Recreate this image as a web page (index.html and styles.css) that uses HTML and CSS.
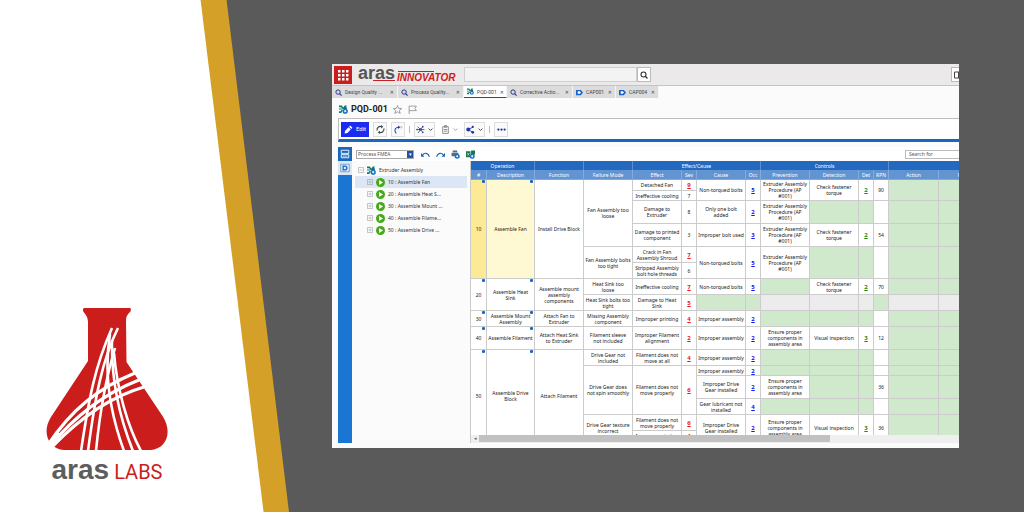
FILE: index.html
```html
<!DOCTYPE html>
<html lang="en">
<head>
<meta charset="utf-8">
<title>Aras Labs – PQD-001</title>
<link rel="stylesheet" href="styles.css">
</head>
<body>
<svg class="defs" aria-hidden="true">
  <symbol id="i-search" viewBox="0 0 16 16"><circle cx="7" cy="7" r="5" fill="none" stroke="currentColor" stroke-width="2.2"/><path d="M10.5 10.5 15 15" stroke="currentColor" stroke-width="2.6"/></symbol>
  <symbol id="i-pqd" viewBox="0 0 16 16"><path d="M0 1h5l3 4 2-4h4L11 6 6 7 4 4H0zM0 6h5v2H0zM0 14h4l3-5-2-1-2 3H0z" fill="#0b7a75"/><path d="M8 4h6v3H8z" fill="#146b5c"/><circle cx="11" cy="11" r="4.6" fill="#1b73c9"/><circle cx="11" cy="11" r="1.9" fill="#e7f3fb"/></symbol>
  <symbol id="i-cap" viewBox="0 0 16 16"><path d="M0 2h11l5 6-5 6H0z" fill="#1565c8"/><path d="M4 5h4.500l3 3-3 3H4z" fill="#fff"/></symbol>
  <symbol id="i-down" viewBox="0 0 8 8"><path d="m1 2.500 3 3 3-3" fill="none" stroke="currentColor" stroke-width="1.400"/></symbol>
  <symbol id="i-play" viewBox="0 0 16 16"><circle cx="8" cy="8" r="8" fill="#46a81c"/><path d="M5.500 3.500 12.500 8l-7 4.500z" fill="#fff"/></symbol>
  <symbol id="i-plus" viewBox="0 0 12 12"><path d="M1 1h10v10H1zM3 6h6M6 3v6" fill="none" stroke="#8b9096"/></symbol>
</svg>
<div class="slide">
  <aside class="brand">
    <div class="brand-panel">
      <div class="brand-mark">
        <svg class="flask" viewBox="0 0 122 142" role="img" aria-label="Aras Labs flask">
          <path d="M37 1 38 0h46l1 1-.5 2.500C82 6 80 8 80 12l.5 42 36 54c11 17 3 33-12 34H18C3 141-5 125 5 109l37-56V14c0-5-3-8-5-11z" fill="#cb1d1c"/>
          <g fill="none" stroke="#fff" stroke-width="2.600">
            <path d="M66 20C49 58 43 90 35 143"/>
            <path d="M72 20C56 52 49 90 42 143"/>
            <path d="M69 40C60 70 54 102 50 143"/>
            <path d="M64 26C57 68 66 110 78 143"/>
            <path d="M66 32C65 76 75 113 87 143"/>
            <path d="M68 45C71 82 82 119 95 143"/>
            <path d="M2 137C25 102 52 80 89 65" stroke-width="3.200"/>
            <path d="M4 138C29 108 57 86 93 72" stroke-width="3.200"/>
            <path d="M6 139C30 114 60 90 98 79" stroke-width="3.200"/>
            <path d="M2 140 13 125" stroke-width="6"/>
          </g>
        </svg>
        <p class="brand-name"><b>aras</b> <span>LABS</span></p>
      </div>
    </div>
  </aside>
  <main class="stage">
    <div class="app">
      <header class="top">
        <button class="waffle" aria-label="Applications"><svg viewBox="0 0 18 18"><path d="M4 4h2.500v2.500H4zM8 4h2.500v2.500H8zM12 4h2.500v2.500H12zM4 8h2.500v2.500H4zM8 8h2.500v2.500H8zM12 8h2.500v2.500H12zM4 12h2.500v2.500H4zM8 12h2.500v2.500H8zM12 12h2.500v2.500H12z" fill="#fff"/></svg></button>
        <p class="wordmark"><b>aras</b><i>INNOVATOR</i></p>
        <form class="search">
          <input type="text" aria-label="Search">
          <button type="button" aria-label="Run search"><svg><use href="#i-search"/></svg></button>
        </form>
        <button class="panes" aria-label="Layout"><svg viewBox="0 0 9 8"><path d="M.5 1h8v6h-8zM4.500 1v6" fill="none" stroke="#444"/></svg></button>
      </header>
      <nav class="tabs">
        <a href="#" class="tab w66"><svg><use href="#i-search"/></svg><span>Design Quality ...</span><b>✕</b></a>
        <a href="#" class="tab w66"><svg><use href="#i-search"/></svg><span>Process Quality...</span><b>✕</b></a>
        <a href="#" class="tab w43 active"><svg><use href="#i-pqd"/></svg><span>PQD-001</span><b>✕</b></a>
        <a href="#" class="tab w66"><svg><use href="#i-search"/></svg><span>Corrective Actio...</span><b>✕</b></a>
        <a href="#" class="tab w43"><svg><use href="#i-cap"/></svg><span>CAP001</span><b>✕</b></a>
        <a href="#" class="tab w43"><svg><use href="#i-cap"/></svg><span>CAP004</span><b>✕</b></a>
      </nav>
      <div class="title">
        <svg><use href="#i-pqd"/></svg>
        <h1>PQD-001</h1>
        <svg viewBox="0 0 16 16"><path d="m8 1 2 5 5.500.3-4.300 3.500L12.800 15 8 12l-4.800 3 1.600-5.200L.5 6.300 6 6z" fill="none" stroke="#777" stroke-width="1.200"/></svg>
        <svg class="flag" viewBox="0 0 16 16"><path d="M2 16V2h13l-3 4 3 4H2" fill="none" stroke="#888" stroke-width="1.400"/></svg>
      </div>
      <div class="toolbar">
        <button class="tool edit"><svg viewBox="0 0 16 16"><path d="m1 15 1-5 6-6 4 4-6 6zM9 3l2-2 4 4-2 2z" fill="#fff"/></svg>Edit</button>
        <button class="tool" aria-label="Refresh"><svg viewBox="0 0 16 16"><path d="M2 10a6 6 0 0 1 8-7M14 6a6 6 0 0 1-8 7" fill="none" stroke="#3c4a50" stroke-width="2"/><path d="M9 0l4 3-4 3zM7 10l-4 3 4 3z" fill="#3c4a50"/></svg></button>
        <button class="tool" aria-label="Redo"><svg viewBox="0 0 16 16"><path d="M4 15C-1 9 3 3 10 4" fill="none" stroke="#2c3e9e" stroke-width="1.800"/><path d="M7 1l4 3-4 3z" fill="#2c3e9e"/><circle cx="13" cy="4" r="1.500" fill="none" stroke="#8aa0cf"/></svg></button>
        <span class="rule"></span>
        <button class="tool wide" aria-label="Structure"><svg viewBox="0 0 16 16"><path d="M8 8 3 3M8 8l4-5M8 8H1M8 8h7M8 8l-4 6M8 8l4 5" stroke="#37474f" stroke-width="1.400"/><g fill="#2c3e9e"><circle cx="8" cy="8" r="2.200"/><circle cx="12" cy="3" r="1.500"/><circle cx="2" cy="8" r="1.500"/><circle cx="12" cy="13" r="1.500"/></g></svg><svg class="caret"><use href="#i-down"/></svg></button>
        <button class="tool wide plain" aria-label="Paste"><svg viewBox="0 0 16 16"><path d="M3 3h10v12H3zM6 1h4v3H6zM5 8h6M5 11h6" fill="none" stroke="#8a8a8a" stroke-width="1.700"/></svg><svg class="caret"><use href="#i-down"/></svg></button>
        <button class="tool wide" aria-label="Share"><svg viewBox="0 0 16 16"><path d="M4 8l8-4M4 8l8 5" stroke="#2434ae" stroke-width="1.500"/><g fill="#2434ae"><circle cx="4" cy="8" r="3.500"/><circle cx="12" cy="3.500" r="2"/><circle cx="12" cy="13" r="2.500"/></g></svg><svg class="caret"><use href="#i-down"/></svg></button>
        <span class="rule"></span>
        <button class="tool" aria-label="More"><svg viewBox="0 0 16 16"><g fill="#26308c"><circle cx="2.500" cy="8" r="2"/><circle cx="8" cy="8" r="2"/><circle cx="13.500" cy="8" r="2"/></g></svg></button>
      </div>
      <section class="work">
        <div class="rail">
          <button aria-label="Form view"><svg viewBox="0 0 16 16"><path d="M2 2h12v5H2zM2 9h12v5H2z" fill="none" stroke="#fff" stroke-width="1.400"/><path d="M4 11.500h8" stroke="#fff"/></svg></button>
          <button class="on" aria-label="FMEA view"><svg viewBox="0 0 16 16"><path d="M1 2h14v12H1z" fill="none" stroke="#567fa9"/><path d="M5 5h3a3 3 0 0 1 0 6H5z" fill="none" stroke="#1565c0" stroke-width="2"/></svg></button>
        </div>
        <div class="editor">
          <div class="bar">
            <div class="picker"><select aria-label="Process view"><option>Process FMEA</option></select><span>▾</span></div>
            <svg viewBox="0 0 16 16"><path d="M3 9c3-5 10-4 12 3" fill="none" stroke="#1767b8" stroke-width="2"/><path d="M0 5v7h6z" fill="#1767b8"/></svg>
            <svg class="redo" viewBox="0 0 16 16"><path d="M13 9C10 4 3 5 1 12" fill="none" stroke="#1767b8" stroke-width="2"/><path d="M16 5v7h-6z" fill="#1767b8"/></svg>
            <svg viewBox="0 0 16 16"><path d="M1 5h12v6H1zM3 1h8v3H3z" fill="#5d6b75"/><circle cx="11" cy="11" r="4.500" fill="#1b73c9"/><circle cx="11" cy="11" r="1.800" fill="#fff"/></svg>
            <svg viewBox="0 0 16 16"><path d="M0 2h8v11H0zM9 1h7v7H9z" fill="#1b7444"/><path d="m2 5 4 5M6 5l-4 5" stroke="#fff"/><circle cx="11" cy="11" r="4.500" fill="#1b73c9"/><circle cx="11" cy="11" r="1.800" fill="#fff"/></svg>
            <input class="find" type="text" placeholder="Search for" aria-label="Search for">
          </div>
          <div class="split">
            <ul class="tree">
              <li class="root"><svg viewBox="0 0 12 12"><path d="M1 1h10v10H1zM3 6h6" fill="none" stroke="#8b9096"/></svg><svg class="kind"><use href="#i-pqd"/></svg>Extruder Assembly</li>
              <li class="picked"><svg><use href="#i-plus"/></svg><svg class="kind"><use href="#i-play"/></svg>10 : Assemble Fan</li>
              <li><svg><use href="#i-plus"/></svg><svg class="kind"><use href="#i-play"/></svg>20 : Assemble Heat S...</li>
              <li><svg><use href="#i-plus"/></svg><svg class="kind"><use href="#i-play"/></svg>30 : Assemble Mount ...</li>
              <li><svg><use href="#i-plus"/></svg><svg class="kind"><use href="#i-play"/></svg>40 : Assemble Filame...</li>
              <li><svg><use href="#i-plus"/></svg><svg class="kind"><use href="#i-play"/></svg>50 : Assemble Drive ...</li>
            </ul>
            <div class="grid">
              <div class="view">
                <table>
                  <colgroup><col class="c-no"><col class="c-desc"><col class="c-text"><col class="c-text"><col class="c-text"><col class="c-num"><col class="c-text"><col class="c-num"><col class="c-text"><col class="c-text"><col class="c-num"><col class="c-num"><col class="c-last"><col class="c-last"></colgroup>
                  <thead>
                    <tr class="groups"><th colspan="2">Operation</th><th></th><th></th><th colspan="4">Effect/Cause</th><th colspan="4">Controls</th><th colspan="2"></th></tr>
                    <tr><th>#</th><th>Description</th><th>Function</th><th>Failure Mode</th><th>Effect</th><th>Sev</th><th>Cause</th><th>Occ</th><th>Prevention</th><th>Detection</th><th>Det</th><th>RPN</th><th>Action</th><th>Resp</th></tr>
                  </thead>
                  <tbody>
                    <tr class="r1"><td rowspan="6" class="dot gold">10</td><td rowspan="6" class="dot cream">Assemble Fan</td><td rowspan="6">Install Drive Block</td><td rowspan="4">Fan Assembly too loose</td><td>Detached Fan</td><td><a class="sev" href="#">9</a></td><td rowspan="2">Non-torqued bolts</td><td rowspan="2"><a class="occ" href="#">5</a></td><td rowspan="2">Extruder Assembly Procedure (AP<br>#001)</td><td rowspan="2">Check fastener torque</td><td rowspan="2"><a class="det" href="#">2</a></td><td rowspan="2">90</td><td rowspan="2" class="na"></td><td rowspan="2" class="na"></td></tr>
                    <tr class="r0"><td>Ineffective cooling</td><td>7</td></tr>
                    <tr class="r3"><td>Damage to<br>Extruder</td><td>8</td><td>Only one bolt<br>added</td><td><a class="occ" href="#">2</a></td><td>Extruder Assembly Procedure (AP<br>#001)</td><td class="na"></td><td class="na"></td><td></td><td class="na"></td><td class="na"></td></tr>
                    <tr class="r3"><td>Damage to printed component</td><td>3</td><td>Improper bolt used</td><td><a class="occ" href="#">3</a></td><td>Extruder Assembly Procedure (AP<br>#001)</td><td>Check fastener torque</td><td><a class="det" href="#">2</a></td><td>54</td><td class="na"></td><td class="na"></td></tr>
                    <tr class="r2"><td rowspan="2">Fan Assembly bolts too tight</td><td>Crack in Fan Assembly Shroud</td><td><a class="sev" href="#">7</a></td><td rowspan="2">Non-torqued bolts</td><td rowspan="2"><a class="occ" href="#">5</a></td><td rowspan="2">Extruder Assembly Procedure (AP<br>#001)</td><td rowspan="2" class="na"></td><td rowspan="2" class="na"></td><td rowspan="2"></td><td rowspan="2" class="na"></td><td rowspan="2" class="na"></td></tr>
                    <tr class="r2"><td>Stripped Assembly bolt hole threads</td><td>6</td></tr>
                    <tr class="r2"><td rowspan="2" class="dot">20</td><td rowspan="2" class="dot">Assemble Heat<br>Sink</td><td rowspan="2">Assemble mount assembly components</td><td>Heat Sink too<br>loose</td><td>Ineffective cooling</td><td><a class="sev" href="#">7</a></td><td>Non-torqued bolts</td><td><a class="occ" href="#">5</a></td><td class="na"></td><td>Check fastener torque</td><td><a class="det" href="#">2</a></td><td>70</td><td class="na"></td><td class="na"></td></tr>
                    <tr class="r2"><td>Heat Sink bolts too tight</td><td>Damage to Heat<br>Sink</td><td><a class="sev" href="#">5</a></td><td class="na"></td><td class="na"></td><td class="off"></td><td class="off"></td><td class="off"></td><td class="na"></td><td class="off"></td><td class="off"></td></tr>
                    <tr class="r2"><td class="dot">30</td><td class="dot">Assemble Mount Assembly</td><td>Attach Fan to Extruder</td><td>Missing Assembly component</td><td>Improper printing</td><td><a class="sev" href="#">4</a></td><td>Improper assembly</td><td><a class="occ" href="#">2</a></td><td class="na"></td><td class="na"></td><td class="na"></td><td></td><td class="na"></td><td class="na"></td></tr>
                    <tr class="r3"><td class="dot">40</td><td class="dot">Assemble Filament</td><td>Attach Heat Sink<br>to Extruder</td><td>Filament sleeve<br>not included</td><td>Improper Filament alignment</td><td><a class="sev" href="#">2</a></td><td>Improper assembly</td><td><a class="occ" href="#">2</a></td><td>Ensure proper components in assembly area</td><td>Visual inspection</td><td><a class="det" href="#">3</a></td><td>12</td><td class="na"></td><td class="na"></td></tr>
                    <tr class="r2"><td rowspan="6" class="dot">50</td><td rowspan="6" class="dot">Assemble Drive Block</td><td rowspan="6">Attach Filament</td><td>Drive Gear not included</td><td>Filament does not move at all</td><td><a class="sev" href="#">4</a></td><td>Improper assembly</td><td><a class="occ" href="#">2</a></td><td class="na"></td><td class="na"></td><td class="na"></td><td></td><td class="na"></td><td class="na"></td></tr>
                    <tr class="r0"><td rowspan="3">Drive Gear does<br>not spin smoothly</td><td rowspan="3">Filament does not move properly</td><td rowspan="3"><a class="sev" href="#">6</a></td><td>Improper assembly</td><td><a class="occ" href="#">2</a></td><td class="na"></td><td class="na"></td><td class="na"></td><td></td><td class="na"></td><td class="na"></td></tr>
                    <tr class="r3"><td>Improper Drive<br>Gear installed</td><td><a class="occ" href="#">2</a></td><td>Ensure proper components in assembly area</td><td class="na"></td><td class="na"></td><td>36</td><td class="na"></td><td class="na"></td></tr>
                    <tr class="r2"><td>Gear lubricant not installed</td><td><a class="occ" href="#">4</a></td><td class="na"></td><td class="na"></td><td class="na"></td><td></td><td class="na"></td><td class="na"></td></tr>
                    <tr class="r2"><td rowspan="2">Drive Gear texture incorrect</td><td>Filament does not move properly</td><td><a class="sev" href="#">6</a></td><td rowspan="2">Improper Drive<br>Gear installed</td><td rowspan="2"><a class="occ" href="#">2</a></td><td rowspan="2">Ensure proper components in assembly area</td><td rowspan="2">Visual inspection</td><td rowspan="2"><a class="det" href="#">3</a></td><td rowspan="2">36</td><td rowspan="2" class="na"></td><td rowspan="2" class="na"></td></tr>
                    <tr class="r1"><td>Improper printing</td><td><a class="sev" href="#">4</a></td></tr>
                  </tbody>
                </table>
              </div>
              <div class="scroll"><span>◂</span><div class="thumb"></div></div>
            </div>
          </div>
        </div>
      </section>
    </div>
  </main>
</div>
</body>
</html>
```

FILE: styles.css
```css
* { box-sizing: border-box; }
body { margin: 0; background: #5a5a5a; font-family: "Noto Sans", "Open Sans", sans-serif; color: #333; }
h1, p, ul { margin: 0; padding: 0; }
button, input, select { font: inherit; color: inherit; margin: 0; padding: 0; border: 0; border-radius: 0; }
a { color: inherit; }
svg { display: block; flex: none; }
.defs { position: absolute; width: 0; height: 0; }

.slide { display: flex; height: 100vh; overflow: hidden; }
.brand { flex: none; width: 289px; background: #d4a027; clip-path: polygon(0 0, 78.400% 0, 100% 100%, 0 100%); }
.brand-panel { height: 100%; background: #fff; clip-path: polygon(0 0, 69.400% 0, 91.200% 100%, 0 100%); display: flex; flex-direction: column; justify-content: flex-end; }
.brand-mark { width: 214px; padding-bottom: 22px; display: flex; flex-direction: column; align-items: center; }
.flask { width: 122px; height: 142px; }
.brand-name { display: flex; align-items: baseline; gap: 5px; line-height: 40px; font-family: "Liberation Sans", Arial, sans-serif; }
.brand-name b { font-size: 28px; color: #5c5d5d; }
.brand-name span { font: 400 20px Roboto, sans-serif; color: #cb1d1c; }

.stage { flex: 1; min-width: 0; padding: 64px 65px 64px 43px; }
.app { height: 100%; background: #fbfbfb; display: flex; flex-direction: column; overflow: hidden; }

.top { flex: none; height: 22px; padding: 2px 0 2px 2px; background: #ebe9e9; border-bottom: 1px solid #c4c4c4; display: flex; align-items: center; }
.waffle { width: 18px; height: 18px; background: #cb1d1c; }
.waffle svg { width: 18px; height: 18px; }
.wordmark { display: flex; align-items: flex-start; gap: 2px; margin-left: 6px; width: 106px; height: 18px; }
.wordmark b { position: relative; font: bold 18px/14px "Liberation Sans", Arial, sans-serif; color: #555; }
.wordmark i { position: relative; margin-top: 4px; font: italic bold 10px/16px "Liberation Sans", Arial, sans-serif; color: #cb1d1c; }
.wordmark b::after { content: ""; position: absolute; left: 15px; right: 0; bottom: -1px; height: 1px; background: #cb1d1c; }
.wordmark i::before { content: ""; position: absolute; left: 1px; width: 36px; top: 1px; height: 1px; background: #cb1d1c; }
.search { display: flex; height: 15px; }
.search input { width: 173px; background: #f3f3f3; border: 1px solid #cfcfcf; }
.search button { width: 14px; background: #fff; border: 1px solid #bbb; display: grid; place-items: center; color: #333; }
.search svg { width: 8px; height: 8px; }
.panes { margin-left: auto; width: 8px; height: 15px; padding-left: 2px; background: #fff; border: 1px solid #bbb; border-right: 0; overflow: hidden; }
.panes svg { width: 9px; height: 8px; }

.tabs { flex: none; display: flex; height: 12px; font: 5px/12px Roboto, sans-serif; color: #444; }
.tab { display: flex; align-items: center; gap: 3px; padding: 0 3px; background: #dcdcdc; border-right: 1px solid #f4f4f4; text-decoration: none; white-space: nowrap; }
.tab svg { width: 7px; height: 7px; color: #26308c; }
.tab b { margin-left: auto; font: 5px/12px "DejaVu Sans", sans-serif; }
.w66 { width: 66px; }
.w43 { width: 43px; }
.active { background: #fff; border-bottom: 1px solid #2b3fd0; }

.title { flex: none; height: 20px; padding: 3px 7px 0; display: flex; align-items: center; gap: 3px; }
.title h1 { font: 700 9px/17px Roboto, sans-serif; color: #222; margin-right: 2px; }
.title svg { width: 9px; height: 9px; }
.title .flag { margin-left: 3px; }

.toolbar { flex: none; height: 24px; margin-left: 6px; padding: 0 2px; display: flex; align-items: center; gap: 4px; background: #fff; border: 1px solid #bdbdbd; border-right: 0; border-bottom: 3px solid #1769bd; }
.tool { flex: none; display: flex; align-items: center; justify-content: center; gap: 3px; width: 14px; height: 15px; background: #fafafa; border: 1px solid #ddd; }
.tool svg { width: 9px; height: 9px; }
.tool .caret { width: 5px; height: 5px; }
.edit { width: 28px; background: #1b2bf0; border-color: #1b2bf0; color: #fff; font: 6px/12px Roboto, sans-serif; }
.wide { width: 21px; }
.plain { background: none; border-color: transparent; color: #999; }
.rule { width: 1px; height: 7px; background: #bbb; }

.work { flex: 1; min-height: 0; display: flex; padding: 5px 0 5px 6px; }
.rail { flex: none; width: 14px; background: #1976d2; }
.rail button { display: grid; place-items: center; width: 14px; height: 14px; background: #1769bd; }
.rail .on { background: #dbe8f5; }
.rail svg { width: 10px; height: 10px; }
.editor { flex: 1; min-width: 0; display: flex; flex-direction: column; }
.bar { flex: none; height: 14px; padding-left: 4px; display: flex; align-items: center; gap: 6px; font-size: 5px; background: #fff; }
.bar svg { width: 9px; height: 9px; }
.picker { position: relative; display: flex; width: 58px; height: 9px; margin-right: 1px; }
.picker select { width: 100%; appearance: none; background: #fff; border: 1px solid #aaa; padding-left: 1px; color: #555; }
.picker span { position: absolute; right: 1px; top: 1px; width: 6px; height: 7px; background: #1f55a5; color: #fff; line-height: 6px; text-align: center; pointer-events: none; }
.find { width: 54px; height: 9px; margin-left: auto; padding-left: 3px; background: #fff; border: 1px solid #bbb; border-right: 0; }
.find::placeholder { color: #555; opacity: 1; }

.split { flex: 1; min-height: 0; display: flex; }
.tree { flex: none; width: 119px; padding: 3px; list-style: none; font-size: 5px; line-height: 12px; border-right: 1px solid #ccc; }
.tree li { display: flex; align-items: center; padding-left: 12px; white-space: nowrap; }
.tree .root { padding-left: 3px; }
.tree svg { width: 6px; height: 6px; }
.tree .kind { width: 9px; height: 9px; margin: 0 3px; }
.tree .picked { background: #dde6f4; }

.grid { flex: 1; min-width: 0; display: flex; flex-direction: column; }
.view { flex: 1; min-height: 0; overflow: hidden; }
table { table-layout: fixed; width: 518px; border-spacing: 0; font-size: 5px; line-height: 6px; color: #222; }
.c-no { width: 16px; }
.c-desc { width: 48px; }
.c-text { width: 49px; }
.c-num { width: 15px; }
.c-last { width: 50px; }
th, td { padding: 0; text-align: center; vertical-align: middle; border-right: 1px solid #ccc; border-bottom: 1px solid #ccc; }
th { height: 10px; background: #6394d2; color: #fff; font-weight: 400; border-color: #82aadc; white-space: nowrap; }
.groups th { height: 9px; background: #2469c0; border-color: #5b8fd2; border-bottom: 0; }
td { background: #fff; }
.r0 { height: 10px; }
.r1 { height: 11px; }
.r2 { height: 16px; }
.r3 { height: 23px; }
td.na { background: #d0e8cc; }
td.off { background: #ececec; }
td.gold { background: #fdea96; }
td.cream { background: #fef9d2; }
.dot { position: relative; }
.dot::after { content: ""; position: absolute; top: 0; right: 1px; width: 3px; height: 3px; background: #1769c8; border-radius: 1px; }
.sev, .occ, .det { font-size: 6px; font-weight: 700; }
.sev { color: #f01414; }
.occ { color: #1414f0; }
.det { color: #128c12; }
.scroll { flex: none; height: 8px; display: flex; background: #efefef; font-size: 5px; line-height: 7px; color: #666; }
.scroll span { width: 8px; text-align: center; }
.thumb { width: 72%; height: 7px; background: #c1c1c1; }
```
